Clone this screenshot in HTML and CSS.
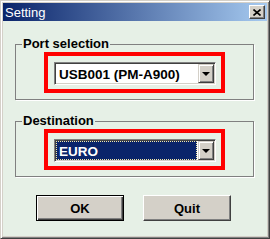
FILE: index.html
```html
<!DOCTYPE html>
<html lang="en">
<head>
  <meta charset="UTF-8" />
  <title>Setting</title>
  <link rel="stylesheet" href="styles.css">
</head>
<body>
  <div class="window">
    <div class="titlebar">
      <span class="title">Setting</span>
      <span class="close-btn">
        <svg width="8" height="7" viewBox="0 0 8 7">
          <path d="M0.5 0.5 L7.5 6.5 M7.5 0.5 L0.5 6.5" stroke="#000" stroke-width="1.6" fill="none"/>
        </svg>
      </span>
    </div>
    <div class="client">
      <fieldset class="group">
        <legend>Port selection</legend>
        <div class="mark">
          <div class="combo">
            <span class="combo-text">USB001 (PM-A900)</span>
            <span class="combo-btn"><span class="arrow"></span></span>
          </div>
        </div>
      </fieldset>
      <fieldset class="group group-dest">
        <legend>Destination</legend>
        <div class="mark">
          <div class="combo">
            <span class="combo-text selected">EURO</span>
            <span class="combo-btn"><span class="arrow"></span></span>
          </div>
        </div>
      </fieldset>
      <div class="buttons">
        <button class="btn btn-default">OK</button>
        <button class="btn">Quit</button>
      </div>
    </div>
  </div>
</body>
</html>
```

FILE: styles.css
```css
* {
  box-sizing: border-box;
}
body {
  margin: 0;
  font-family: 'Liberation Sans', Arial, sans-serif;
}
.window {
  width: 270px;
  height: 239px;
  background: #d4d0c8;
  border: 1px solid;
  border-color: #d4d0c8 #404040 #404040 #d4d0c8;
  box-shadow: inset 1px 1px #fff, inset -1px -1px #808080;
  padding: 2px;
  display: flex;
  flex-direction: column;
}
.titlebar {
  height: 18px;
  background: linear-gradient(to right, #0a246a, #a6caf0);
  color: #fff;
  font-size: 13px;
  display: flex;
  align-items: center;
  justify-content: space-between;
  padding: 0 2px;
}
.close-btn {
  width: 16px;
  height: 14px;
  background: #d4d0c8;
  border: 1px solid;
  border-color: #fff #404040 #404040 #fff;
  box-shadow: inset -1px -1px #808080;
  display: flex;
  align-items: center;
  justify-content: center;
}
.client {
  flex: 1;
  background: #e6f0e6;
  padding-top: 15px;
}
.group {
  margin: 0 13px 0 12px;
  padding: 0 7px 6px 7px;
  border: 1px solid #808080;
  box-shadow: 1px 1px 0 #fff;
  min-width: 0;
}
.group legend {
  font-size: 13px;
  font-weight: bold;
  line-height: 16px;
  padding: 0 1px;
  margin-left: -1px;
}
.group-dest {
  margin-top: 13px;
}
.mark {
  width: 181px;
  margin: 0 auto;
  border: 4px solid #ff0000;
  padding: 6px 5px 4px 6px;
}
.combo {
  height: 23px;
  background: #fff;
  border: 1px solid;
  border-color: #808080 #fff #fff #808080;
  box-shadow: inset 1px 1px #404040, inset -1px -1px #d4d0c8;
  padding: 1px;
  display: flex;
  align-items: stretch;
}
.combo-text {
  flex: 1;
  font-size: 13.5px;
  font-weight: bold;
  line-height: 19px;
  padding-left: 2px;
  border: 1px solid transparent;
  margin-right: 1px;
  white-space: nowrap;
  overflow: hidden;
}
.combo-text.selected {
  background: #0a246a;
  color: #fff;
  border: 1px dotted #f4e9a8;
}
.combo-btn {
  width: 16px;
  flex: none;
  background: #d4d0c8;
  border: 1px solid;
  border-color: #d4d0c8 #404040 #404040 #d4d0c8;
  box-shadow: inset 1px 1px #fff, inset -1px -1px #808080;
  display: flex;
  align-items: center;
  justify-content: center;
}
.arrow {
  width: 0;
  height: 0;
  border-left: 4px solid transparent;
  border-right: 4px solid transparent;
  border-top: 4px solid #000;
}
.buttons {
  display: flex;
  gap: 19px;
  margin-top: 18px;
  padding-left: 33px;
}
.btn {
  width: 88px;
  height: 26px;
  background: #d4d0c8;
  border: 1px solid;
  border-color: #fff #404040 #404040 #fff;
  box-shadow: inset -1px -1px #808080;
  font-family: 'Liberation Sans', Arial, sans-serif;
  font-size: 13px;
  font-weight: bold;
  color: #000;
  padding: 0;
}
.btn-default {
  border-color: #000;
  box-shadow: inset 1px 1px #fff, inset -1px -1px #404040, inset -2px -2px #808080;
}
```
